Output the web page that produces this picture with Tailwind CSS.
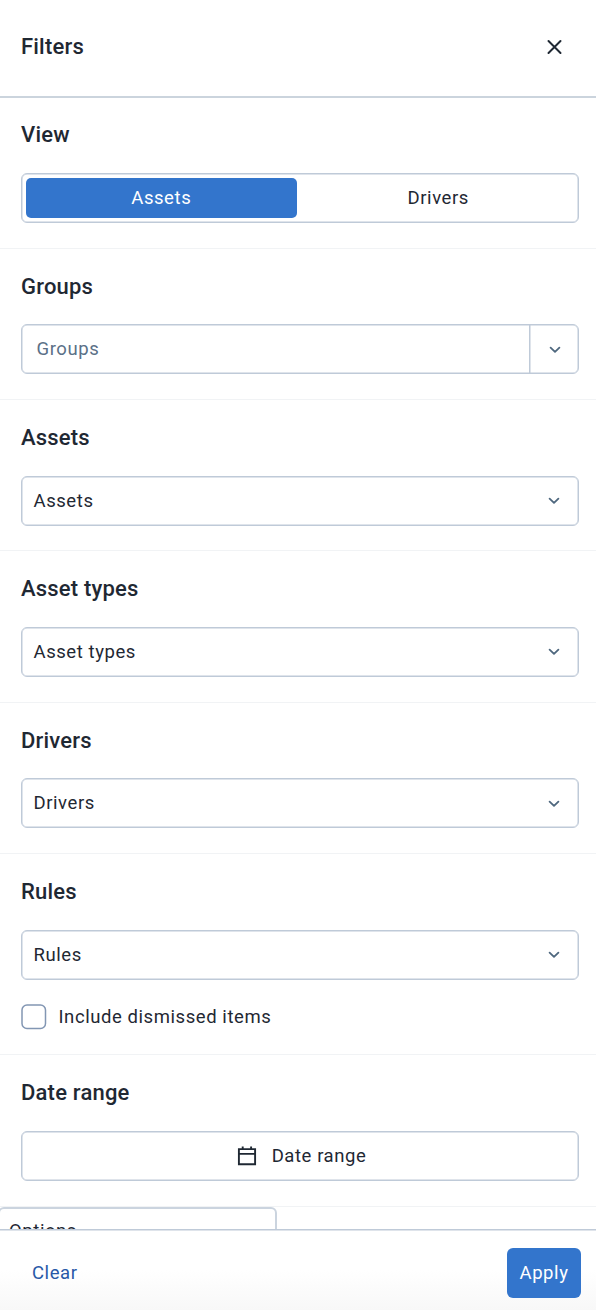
<!DOCTYPE html>
<html lang="en">
<head>
<meta charset="utf-8">
<title>Filters</title>
<script src="https://cdn.jsdelivr.net/npm/@tailwindcss/browser@4"></script>
</head>
<body class="w-[596px] h-[1310px] overflow-hidden bg-white text-[#1f2833] font-[Roboto,sans-serif] text-[18.5px] tracking-[0.57px]">
<svg class="hidden">
  <symbol id="chevron" viewBox="0 0 12 8"><path d="M1.600 1.600 6 5.800l4.400-4.200" fill="none" stroke="#4e677e" stroke-width="1.800" stroke-linecap="round" stroke-linejoin="round"/></symbol>
</svg>
<div class="flex flex-col h-full">
  <header class="h-[98px] shrink-0 flex justify-between border-b-2 border-[#cbd4dd] pl-[21px] pr-[34px] pt-[32px]">
    <h1 class="text-[22px] leading-[30px] font-medium tracking-[0.2px]">Filters</h1>
    <svg class="w-[16px] h-[16px] mt-[7px]" viewBox="0 0 16 16"><path d="m2.500 2 12 12M14.500 2 2.500 14" fill="none" stroke="#1f2833" stroke-width="2" stroke-linecap="round"/></svg>
  </header>
  <main class="flex-1 min-h-0 overflow-hidden">
    <section class="h-[151px] border-b border-[#f1f3f5] pl-[21px] pr-[17px] pt-[22px]">
      <h2 class="text-[22px] leading-[30px] font-medium tracking-[0.2px]">View</h2>
      <div class="mt-[23px] h-[50px] border border-[#bfcad8] shadow-[inset_0_0_0_0.5px_#bfcad8] rounded-[6px] p-[3.500px] pr-0 flex leading-[41px] text-center">
        <div class="w-[271.500px] h-[40.500px] rounded-[5px] bg-[#3375cc] text-white">Assets</div>
        <div class="flex-1 pl-[1.500px]">Drivers</div>
      </div>
    </section>
    <section class="h-[151px] border-b border-[#f1f3f5] pl-[21px] pr-[17px] pt-[23px]">
      <h2 class="text-[22px] leading-[30px] font-medium tracking-[0.2px]">Groups</h2>
      <div class="mt-[22px] h-[50px] border border-[#bfcad8] shadow-[inset_0_0_0_0.5px_#bfcad8] rounded-[6px] flex">
        <div class="flex-1 pl-[14.500px] leading-[48px] text-[#5b7087]">Groups</div>
        <div class="w-[49px] border-l border-[#bfcad8] shadow-[inset_0.5px_0_0_0_#bfcad8] flex items-center justify-center"><svg class="w-[12px] h-[8px] mt-[2px] ml-px"><use href="#chevron"/></svg></div>
      </div>
    </section>
    <section class="h-[151px] border-b border-[#f1f3f5] pl-[21px] pr-[17px] pt-[23px]">
      <h2 class="text-[22px] leading-[30px] font-medium tracking-[0.2px]">Assets</h2>
      <div class="mt-[23px] h-[50px] border border-[#bfcad8] shadow-[inset_0_0_0_0.5px_#bfcad8] rounded-[6px] flex items-center justify-between pl-[11.500px] pr-[17.600px]">
        <span class="leading-[48px]">Assets</span><svg class="w-[12px] h-[8px]"><use href="#chevron"/></svg>
      </div>
    </section>
    <section class="h-[152px] border-b border-[#f1f3f5] pl-[21px] pr-[17px] pt-[23px]">
      <h2 class="text-[22px] leading-[30px] font-medium tracking-[0.2px]">Asset types</h2>
      <div class="mt-[23px] h-[50px] border border-[#bfcad8] shadow-[inset_0_0_0_0.5px_#bfcad8] rounded-[6px] flex items-center justify-between pl-[11.500px] pr-[17.600px]">
        <span class="leading-[48px]">Asset types</span><svg class="w-[12px] h-[8px]"><use href="#chevron"/></svg>
      </div>
    </section>
    <section class="h-[151px] border-b border-[#f1f3f5] pl-[21px] pr-[17px] pt-[23px]">
      <h2 class="text-[22px] leading-[30px] font-medium tracking-[0.2px]">Drivers</h2>
      <div class="mt-[22px] h-[50px] border border-[#bfcad8] shadow-[inset_0_0_0_0.5px_#bfcad8] rounded-[6px] flex items-center justify-between pl-[11.500px] pr-[17.600px]">
        <span class="leading-[48px]">Drivers</span><svg class="w-[12px] h-[8px] mt-[2px]"><use href="#chevron"/></svg>
      </div>
    </section>
    <section class="h-[201px] border-b border-[#f1f3f5] pl-[21px] pr-[17px] pt-[23px]">
      <h2 class="text-[22px] leading-[30px] font-medium tracking-[0.2px]">Rules</h2>
      <div class="mt-[23px] h-[50px] border border-[#bfcad8] shadow-[inset_0_0_0_0.5px_#bfcad8] rounded-[6px] flex items-center justify-between pl-[11.500px] pr-[17.600px]">
        <span class="leading-[48px]">Rules</span><svg class="w-[12px] h-[8px]"><use href="#chevron"/></svg>
      </div>
      <label class="mt-[24px] flex items-center gap-[11.500px] h-[26px]">
        <svg class="w-[26px] h-[26px]" viewBox="0 0 26 26"><rect x="1" y="1" width="23.500" height="23.500" rx="5" fill="none" stroke="#8296b3" stroke-width="1.500"/></svg>
        <span class="leading-[26px]">Include dismissed items</span>
      </label>
    </section>
    <section class="h-[152px] border-b border-[#f1f3f5] pl-[21px] pr-[17px] pt-[23px]">
      <h2 class="text-[22px] leading-[30px] font-medium tracking-[0.2px]">Date range</h2>
      <div class="mt-[23px] h-[50px] border border-[#bfcad8] shadow-[inset_0_0_0_0.5px_#bfcad8] rounded-[6px] flex items-center justify-center gap-[15px] pl-[3px]">
        <svg class="w-[20px] h-[20px]" viewBox="0 0 20 20"><path d="M1.900 3.100h16.200v15.100H1.900zM1.900 7.900h16.200M5.700 0.500v3M14.100 0.500v3" fill="none" stroke="#1f2833" stroke-width="1.900"/></svg>
        <span class="leading-[48px]">Date range</span>
      </div>
    </section>
    <div class="h-[50px] w-[279px] -ml-[2px] border-2 border-[#cbd4df] rounded-[6px] bg-white pl-[9px] leading-[44px]">Options</div>
  </main>
  <footer class="h-[81px] shrink-0 flex items-start justify-between border-t border-[#bfcad8] shadow-[inset_0_0.5px_0_0_#bfcad8] bg-linear-to-b from-white from-50% to-[#f8f8f8] pl-[32px] pr-[15px] pt-[17.500px] leading-[50px]">
    <span class="text-[#2859a7]">Clear</span>
    <button class="w-[74px] h-[50px] rounded-[6px] bg-[#3375cc] text-white">Apply</button>
  </footer>
</div>
</body>
</html>
